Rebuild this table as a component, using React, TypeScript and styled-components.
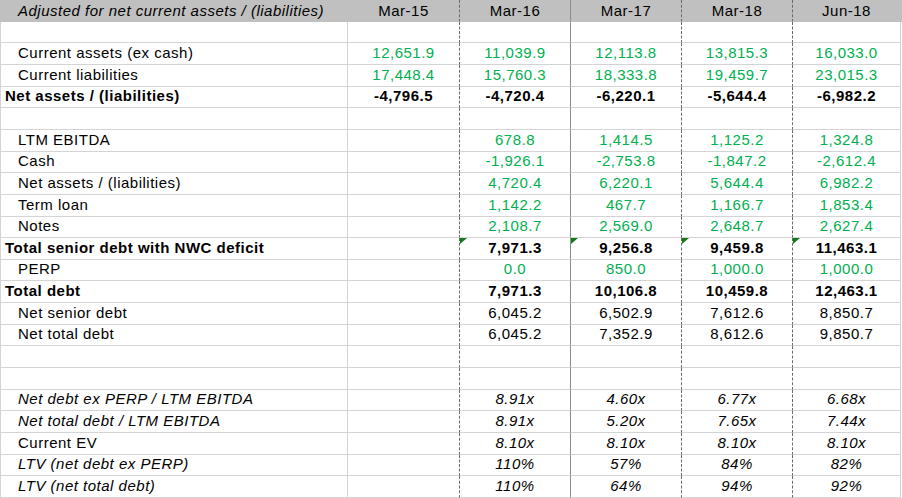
import * as React from "react";
import styled, { createGlobalStyle } from "styled-components";

type Tone = "green" | "black";
type Edge = "light" | "dashed" | "solid";

interface LineData {
  label?: string;
  values?: string[];
  tone?: Tone;
  bold?: boolean;
  italicLabel?: boolean;
  italicValues?: boolean;
  indent?: boolean;
  flag?: boolean;
}

const GlobalStyle = createGlobalStyle`
  html, body {
    margin: 0;
    padding: 0;
    background: #ffffff;
  }
`;

const COLUMNS = ["Mar-15", "Mar-16", "Mar-17", "Mar-18", "Jun-18"];
const EDGES: Edge[] = ["light", "dashed", "solid", "dashed", "dashed", "light"];
const GRID_LINE = "#d4d4d4";

const Sheet = styled.div`
  width: 902px;
  font-family: "Liberation Sans", Arial, sans-serif;
  font-size: 15px;
  line-height: 17px;
  letter-spacing: 0.5px;
  color: #000000;
`;

const Row = styled.div<{ $h: number; $head?: boolean }>`
  display: grid;
  grid-template-columns: 347px 112px 111px 111px 111px 108px;
  box-sizing: border-box;
  width: 902px;
  height: ${p => p.$h}px;
  border-left: 1px solid ${p => (p.$head ? "#c0c0c0" : GRID_LINE)};
  background: ${p => (p.$head ? "#c0c0c0" : "#ffffff")};
`;

const edgeStyle = (edge: Edge, head?: boolean) => {
  if (edge === "dashed") return "1px dashed #6a6a6a";
  if (edge === "solid") return "1px solid #8c8c8c";
  return `1px solid ${head ? "transparent" : GRID_LINE}`;
};

const Cell = styled.div<{
  $edge: Edge;
  $head?: boolean;
  $center?: boolean;
  $indent?: boolean;
  $tone?: Tone;
  $bold?: boolean;
  $italic?: boolean;
  $flag?: boolean;
}>`
  position: relative;
  display: flex;
  align-items: flex-end;
  justify-content: ${p => (p.$center ? "center" : "flex-start")};
  box-sizing: border-box;
  padding-left: ${p => (p.$center ? 0 : p.$indent ? 17 : 4)}px;
  padding-bottom: ${p => (p.$head ? 2 : 3)}px;
  border-right: ${p => edgeStyle(p.$edge, p.$head)};
  border-bottom: 1px solid ${p => (p.$head ? "transparent" : GRID_LINE)};
  color: ${p => (p.$tone === "green" ? "#00b050" : "#000000")};
  font-weight: ${p => (p.$bold ? 700 : 400)};
  font-style: ${p => (p.$italic ? "italic" : "normal")};
  white-space: nowrap;
  overflow: hidden;

  &::before {
    content: "";
    display: ${p => (p.$flag ? "block" : "none")};
    position: absolute;
    top: 0;
    left: 0;
    width: 0;
    height: 0;
    border-top: 6px solid #127a18;
    border-right: 7px solid transparent;
  }
`;

const LINES: LineData[] = [
  {},
  { label: "Current assets (ex cash)", values: ["12,651.9", "11,039.9", "12,113.8", "13,815.3", "16,033.0"], tone: "green", indent: true },
  { label: "Current liabilities", values: ["17,448.4", "15,760.3", "18,333.8", "19,459.7", "23,015.3"], tone: "green", indent: true },
  { label: "Net assets / (liabilities)", values: ["-4,796.5", "-4,720.4", "-6,220.1", "-5,644.4", "-6,982.2"], bold: true },
  {},
  { label: "LTM EBITDA", values: ["", "678.8", "1,414.5", "1,125.2", "1,324.8"], tone: "green", indent: true },
  { label: "Cash", values: ["", "-1,926.1", "-2,753.8", "-1,847.2", "-2,612.4"], tone: "green", indent: true },
  { label: "Net assets / (liabilities)", values: ["", "4,720.4", "6,220.1", "5,644.4", "6,982.2"], tone: "green", indent: true },
  { label: "Term loan", values: ["", "1,142.2", "467.7", "1,166.7", "1,853.4"], tone: "green", indent: true },
  { label: "Notes", values: ["", "2,108.7", "2,569.0", "2,648.7", "2,627.4"], tone: "green", indent: true },
  { label: "Total senior debt with NWC deficit", values: ["", "7,971.3", "9,256.8", "9,459.8", "11,463.1"], bold: true, flag: true },
  { label: "PERP", values: ["", "0.0", "850.0", "1,000.0", "1,000.0"], tone: "green", indent: true },
  { label: "Total debt", values: ["", "7,971.3", "10,106.8", "10,459.8", "12,463.1"], bold: true },
  { label: "Net senior debt", values: ["", "6,045.2", "6,502.9", "7,612.6", "8,850.7"], indent: true },
  { label: "Net total debt", values: ["", "6,045.2", "7,352.9", "8,612.6", "9,850.7"], indent: true },
  {},
  {},
  { label: "Net debt ex PERP / LTM EBITDA", values: ["", "8.91x", "4.60x", "6.77x", "6.68x"], indent: true, italicLabel: true, italicValues: true },
  { label: "Net total debt / LTM EBITDA", values: ["", "8.91x", "5.20x", "7.65x", "7.44x"], indent: true, italicLabel: true, italicValues: true },
  { label: "Current EV", values: ["", "8.10x", "8.10x", "8.10x", "8.10x"], indent: true, italicValues: true },
  { label: "LTV (net debt ex PERP)", values: ["", "110%", "57%", "84%", "82%"], indent: true, italicLabel: true, italicValues: true },
  { label: "LTV (net total debt)", values: ["", "110%", "64%", "94%", "92%"], indent: true, italicLabel: true, italicValues: true },
];

// rows share 498px the way the spreadsheet zoom rounds them
const TOTAL_ROWS = LINES.length + 1;
const rowHeight = (i: number) =>
  Math.round(((i + 1) * 498) / TOTAL_ROWS) - Math.round((i * 498) / TOTAL_ROWS);

export default function App() {
  return (
    <>
      <GlobalStyle />
      <Sheet>
        <Row $h={rowHeight(0)} $head>
          <Cell $edge={EDGES[0]} $head $indent $italic>
            Adjusted for net current assets / (liabilities)
          </Cell>
          {COLUMNS.map((c, i) => (
            <Cell key={c} $edge={EDGES[i + 1]} $head $center>
              {c}
            </Cell>
          ))}
        </Row>
        {LINES.map((line, r) => (
          <Row key={r} $h={rowHeight(r + 1)}>
            <Cell
              $edge={EDGES[0]}
              $indent={line.indent}
              $bold={line.bold}
              $italic={line.italicLabel}
            >
              {line.label ?? ""}
            </Cell>
            {COLUMNS.map((c, i) => {
              const v = line.values ? line.values[i] : "";
              return (
                <Cell
                  key={c}
                  $edge={EDGES[i + 1]}
                  $center
                  $tone={line.tone}
                  $bold={line.bold}
                  $italic={line.italicValues}
                  $flag={line.flag && v !== ""}
                >
                  {v}
                </Cell>
              );
            })}
          </Row>
        ))}
      </Sheet>
    </>
  );
}
